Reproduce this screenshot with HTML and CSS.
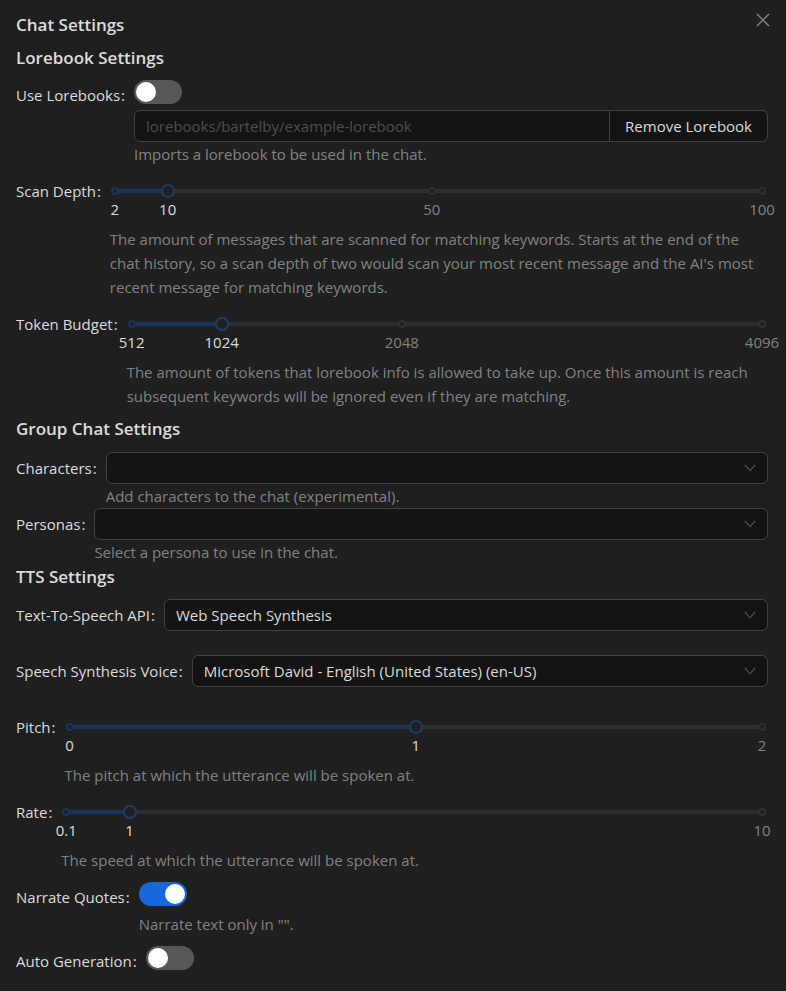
FILE: index.html
```html
<!DOCTYPE html>
<html lang="en">
<head>
<meta charset="utf-8">
<title>Chat Settings</title>
<link rel="stylesheet" href="styles.css">
</head>
<body>
<div class="modal">
  <button class="close" aria-label="Close">
    <svg width="14" height="14" viewBox="0 0 14 14"><path d="M1 1 L13 13 M13 1 L1 13" stroke="currentColor" stroke-width="1.4" fill="none"/></svg>
  </button>
  <h1 class="title">Chat Settings</h1>

  <h2 class="section">Lorebook Settings</h2>
  <div class="item">
    <label class="label">Use Lorebooks</label>
    <div class="control">
      <div class="switch-row"><span class="switch"><span class="knob"></span></span></div>
      <div class="input-group">
        <input class="input" type="text" placeholder="lorebooks/bartelby/example-lorebook">
        <button class="btn">Remove Lorebook</button>
      </div>
      <div class="help">Imports a lorebook to be used in the chat.</div>
    </div>
  </div>

  <div class="item">
    <label class="label">Scan Depth</label>
    <div class="control">
      <div class="slider">
        <div class="rail"></div>
        <div class="track" style="width:8.163%"></div>
        <span class="dot active" style="left:0%"></span>
        <span class="dot active" style="left:8.163%"></span>
        <span class="dot" style="left:48.98%"></span>
        <span class="dot" style="left:100%"></span>
        <span class="handle" style="left:8.163%"></span>
        <span class="mark active" style="left:0%">2</span>
        <span class="mark active" style="left:8.163%">10</span>
        <span class="mark" style="left:48.98%">50</span>
        <span class="mark" style="left:100%">100</span>
      </div>
      <div class="help">The amount of messages that are scanned for matching keywords. Starts at the end of the chat history, so a scan depth of two would scan your most recent message and the AI's most recent message for matching keywords.</div>
    </div>
  </div>

  <div class="item">
    <label class="label">Token Budget</label>
    <div class="control">
      <div class="slider">
        <div class="rail"></div>
        <div class="track" style="width:14.286%"></div>
        <span class="dot active" style="left:0%"></span>
        <span class="dot active" style="left:14.286%"></span>
        <span class="dot" style="left:42.857%"></span>
        <span class="dot" style="left:100%"></span>
        <span class="handle" style="left:14.286%"></span>
        <span class="mark active" style="left:0%">512</span>
        <span class="mark active" style="left:14.286%">1024</span>
        <span class="mark" style="left:42.857%">2048</span>
        <span class="mark" style="left:100%">4096</span>
      </div>
      <div class="help">The amount of tokens that lorebook info is allowed to take up. Once this amount is reach subsequent keywords will be ignored even if they are matching.</div>
    </div>
  </div>

  <h2 class="section section-group">Group Chat Settings</h2>
  <div class="item item-tight">
    <label class="label">Characters</label>
    <div class="control">
      <div class="select"><span class="select-value"></span><svg class="chevron" width="12" height="8" viewBox="0 0 12 8"><path d="M0.8 1 L6 6.6 L11.2 1" stroke="currentColor" stroke-width="1.3" fill="none"/></svg></div>
      <div class="help">Add characters to the chat (experimental).</div>
    </div>
  </div>
  <div class="item item-tight">
    <label class="label">Personas</label>
    <div class="control">
      <div class="select"><span class="select-value"></span><svg class="chevron" width="12" height="8" viewBox="0 0 12 8"><path d="M0.8 1 L6 6.6 L11.2 1" stroke="currentColor" stroke-width="1.3" fill="none"/></svg></div>
      <div class="help">Select a persona to use in the chat.</div>
    </div>
  </div>

  <h2 class="section section-tts">TTS Settings</h2>
  <div class="item item-wide">
    <label class="label">Text-To-Speech API</label>
    <div class="control">
      <div class="select"><span class="select-value">Web Speech Synthesis</span><svg class="chevron" width="12" height="8" viewBox="0 0 12 8"><path d="M0.8 1 L6 6.6 L11.2 1" stroke="currentColor" stroke-width="1.3" fill="none"/></svg></div>
    </div>
  </div>
  <div class="item item-wide">
    <label class="label">Speech Synthesis Voice</label>
    <div class="control">
      <div class="select"><span class="select-value">Microsoft David - English (United States) (en-US)</span><svg class="chevron" width="12" height="8" viewBox="0 0 12 8"><path d="M0.8 1 L6 6.6 L11.2 1" stroke="currentColor" stroke-width="1.3" fill="none"/></svg></div>
    </div>
  </div>

  <div class="item">
    <label class="label">Pitch</label>
    <div class="control">
      <div class="slider">
        <div class="rail"></div>
        <div class="track" style="width:50%"></div>
        <span class="dot active" style="left:0%"></span>
        <span class="dot active" style="left:50%"></span>
        <span class="dot" style="left:100%"></span>
        <span class="handle" style="left:50%"></span>
        <span class="mark active" style="left:0%">0</span>
        <span class="mark active" style="left:50%">1</span>
        <span class="mark" style="left:100%">2</span>
      </div>
      <div class="help">The pitch at which the utterance will be spoken at.</div>
    </div>
  </div>

  <div class="item">
    <label class="label">Rate</label>
    <div class="control">
      <div class="slider">
        <div class="rail"></div>
        <div class="track" style="width:9.091%"></div>
        <span class="dot active" style="left:0%"></span>
        <span class="dot active" style="left:9.091%"></span>
        <span class="dot" style="left:100%"></span>
        <span class="handle" style="left:9.091%"></span>
        <span class="mark active" style="left:0%">0.1</span>
        <span class="mark active" style="left:9.091%">1</span>
        <span class="mark" style="left:100%">10</span>
      </div>
      <div class="help">The speed at which the utterance will be spoken at.</div>
    </div>
  </div>

  <div class="item">
    <label class="label">Narrate Quotes</label>
    <div class="control">
      <div class="switch-row"><span class="switch on"><span class="knob"></span></span></div>
      <div class="help">Narrate text only in "".</div>
    </div>
  </div>

  <div class="item">
    <label class="label">Auto Generation</label>
    <div class="control">
      <div class="switch-row"><span class="switch"><span class="knob"></span></span></div>
    </div>
  </div>
</div>
</body>
</html>
```

FILE: styles.css
```css
html, body {
  margin: 0;
  padding: 0;
  background: #1f1f1f;
}

body {
  font-family: "Open Sans", "Noto Sans", "Liberation Sans", sans-serif;
  font-size: 15px;
  color: rgba(255, 255, 255, 0.85);
}

.modal {
  position: relative;
  padding: 13px 18px 0 16px;
}

.close {
  position: absolute;
  top: 13px;
  right: 16px;
  width: 14px;
  height: 14px;
  padding: 0;
  border: 0;
  background: none;
  color: rgba(255, 255, 255, 0.45);
  display: flex;
}

.title,
.section {
  margin: 0;
  font-size: 17px;
  line-height: 24px;
  font-weight: 600;
  color: rgba(255, 255, 255, 0.85);
}

.title {
  margin-bottom: 9px;
}

.section {
  margin-bottom: 9px;
}

.section-group {
  margin-top: 0;
  margin-bottom: 11px;
}

.section-tts {
  margin-top: 1px;
  margin-bottom: 10px;
}

.item {
  display: flex;
  align-items: flex-start;
  margin-bottom: 9px;
}

.item-tight {
  margin-bottom: 0;
}

.item-wide {
  margin-bottom: 24px;
}

.label {
  flex: none;
  line-height: 32px;
  white-space: nowrap;
  color: rgba(255, 255, 255, 0.85);
}

.label::after {
  content: ":";
  margin: 0 9px 0 1px;
}

.control {
  flex: 1;
  min-width: 0;
}

.help {
  line-height: 24px;
  color: rgba(255, 255, 255, 0.45);
}

/* Switch */
.switch-row {
  height: 31px;
}

.switch {
  display: inline-block;
  position: relative;
  margin-top: 1px;
  width: 48px;
  height: 24px;
  border-radius: 12px;
  background: rgba(255, 255, 255, 0.25);
}

.switch.on {
  background: #1668dc;
}

.knob {
  position: absolute;
  top: 2px;
  left: 2px;
  width: 20px;
  height: 20px;
  border-radius: 50%;
  background: #fff;
}

.switch.on .knob {
  left: 26px;
}

/* Input group */
.input-group {
  display: flex;
  height: 32px;
}

.input {
  flex: 1;
  min-width: 0;
  box-sizing: border-box;
  height: 32px;
  padding: 0 11px;
  border: 1px solid #424242;
  border-radius: 6px 0 0 6px;
  background: #141414;
  font: inherit;
  color: rgba(255, 255, 255, 0.85);
  outline: none;
}

.input::placeholder {
  color: rgba(255, 255, 255, 0.25);
}

.btn {
  flex: none;
  box-sizing: border-box;
  height: 32px;
  padding: 0 15px;
  border: 1px solid #424242;
  border-left: 0;
  border-radius: 0 6px 6px 0;
  background: #141414;
  font: inherit;
  color: rgba(255, 255, 255, 0.85);
}

/* Select */
.select {
  display: flex;
  align-items: center;
  box-sizing: border-box;
  height: 32px;
  padding: 0 11px;
  border: 1px solid #424242;
  border-radius: 6px;
  background: #141414;
  color: rgba(255, 255, 255, 0.85);
}

.select-value {
  flex: 1;
  white-space: nowrap;
  overflow: hidden;
}

.chevron {
  flex: none;
  color: rgba(255, 255, 255, 0.25);
}

/* Slider */
.slider {
  position: relative;
  height: 52px;
  margin: 0 6px 0 5px;
}

.rail {
  position: absolute;
  left: 0;
  right: 0;
  top: 14px;
  height: 4px;
  border-radius: 2px;
  background: #2e2e2e;
}

.track {
  position: absolute;
  left: 0;
  top: 14px;
  height: 4px;
  border-radius: 2px;
  background: #16345e;
}

.dot {
  position: absolute;
  top: 12px;
  width: 8px;
  height: 8px;
  margin-left: -4px;
  box-sizing: border-box;
  border: 2px solid #2e2e2e;
  border-radius: 50%;
  background: #1f1f1f;
}

.dot.active {
  border-color: #16345e;
}

.handle {
  position: absolute;
  top: 9px;
  width: 14px;
  height: 14px;
  margin-left: -7px;
  box-sizing: border-box;
  border: 2.5px solid #1b3b69;
  border-radius: 50%;
  background: #1f1f1f;
}

.mark {
  position: absolute;
  top: 24px;
  line-height: 20px;
  transform: translateX(-50%);
  white-space: nowrap;
  color: rgba(255, 255, 255, 0.45);
}

.mark.active {
  color: rgba(255, 255, 255, 0.85);
}
```
